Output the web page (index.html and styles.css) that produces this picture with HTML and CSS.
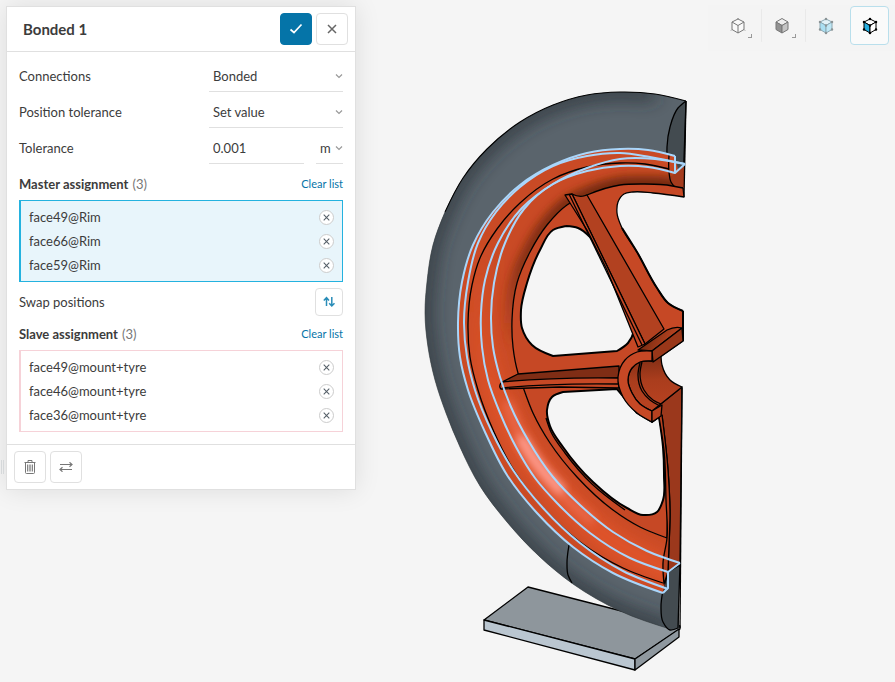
FILE: index.html
```html
<!DOCTYPE html>
<html lang="en">
<head>
<meta charset="utf-8">
<title>Bonded 1</title>
<link rel="stylesheet" href="styles.css">
</head>
<body>
<svg class="defs" aria-hidden="true">
  <symbol id="chev" viewBox="0 0 8 8"><path d="M1 2.500 4 5.500 7 2.500" fill="none" stroke="currentColor" stroke-width="1.200"/></symbol>
  <symbol id="x" viewBox="0 0 10 10"><path d="M1 1 9 9M9 1 1 9" fill="none" stroke="currentColor" stroke-width="1.500"/></symbol>
</svg>
<main class="app">
  <form class="panel">
    <header class="head">
      <h1>Bonded 1</h1>
      <button type="button" class="btn primary" aria-label="Apply"><svg width="14" height="12" viewBox="0 0 14 12"><path d="M1.500 6.500 5 9.500 12.500 1.500" fill="none" stroke="#fff" stroke-width="1.700"/></svg></button>
      <button type="button" class="btn" aria-label="Close"><svg width="10" height="10"><use href="#x"/></svg></button>
    </header>
    <div class="body">
      <div class="row"><label for="conn">Connections</label>
        <div class="field"><select id="conn"><option>Bonded</option></select><svg class="chev"><use href="#chev"/></svg></div></div>
      <div class="row"><label for="pos">Position tolerance</label>
        <div class="field"><select id="pos"><option>Set value</option></select><svg class="chev"><use href="#chev"/></svg></div></div>
      <div class="row"><label for="tol">Tolerance</label>
        <div class="pair">
          <div class="field"><input id="tol" type="text" value="0.001"></div>
          <div class="field unit"><select aria-label="Unit"><option>m</option></select><svg class="chev"><use href="#chev"/></svg></div>
        </div></div>
      <div class="title"><h2>Master assignment <span>(3)</span></h2><a href="#">Clear list</a></div>
      <ul class="list active">
        <li>face49@Rim<button type="button" aria-label="Remove"><svg><use href="#x"/></svg></button></li>
        <li>face66@Rim<button type="button" aria-label="Remove"><svg><use href="#x"/></svg></button></li>
        <li>face59@Rim<button type="button" aria-label="Remove"><svg><use href="#x"/></svg></button></li>
      </ul>
      <div class="swap"><span>Swap positions</span>
        <button type="button" class="btn small" aria-label="Swap positions"><svg width="12" height="12" viewBox="0 0 12 12" fill="none" stroke="#2a8db8" stroke-width="1.500"><path d="M3.500 10V2M.8 4.500 3.500 1.700 6 4.500M8.800 1V9.500M6.200 7.200 8.800 10 11.500 7.200"/></svg></button></div>
      <div class="title"><h2>Slave assignment <span>(3)</span></h2><a href="#">Clear list</a></div>
      <ul class="list">
        <li>face49@mount+tyre<button type="button" aria-label="Remove"><svg><use href="#x"/></svg></button></li>
        <li>face46@mount+tyre<button type="button" aria-label="Remove"><svg><use href="#x"/></svg></button></li>
        <li>face36@mount+tyre<button type="button" aria-label="Remove"><svg><use href="#x"/></svg></button></li>
      </ul>
    </div>
    <footer class="foot">
      <button type="button" class="btn" aria-label="Delete"><svg width="12" height="14" viewBox="0 0 12 14" fill="none" stroke="#777"><path d="M.5 2.500H11.500M4 2V.500H8V2M1.500 3V12.500Q1.500 13.500 2.500 13.500H9.500Q10.500 13.500 10.500 12.500V3"/><path d="M3.500 4.500V11.500M5.200 4.500V11.500M6.800 4.500V11.500M8.500 4.500V11.500" stroke-width=".9"/></svg></button>
      <button type="button" class="btn" aria-label="Exchange"><svg width="14" height="10" viewBox="0 0 14 10" fill="none" stroke="#777" stroke-width="1.200"><path d="M1 2.500H13M10.500 .3 13 2.500 10.500 4.700M13 7.500H1M3.500 5.300 1 7.500 3.500 9.700"/></svg></button>
    </footer>
  </form>
  <span class="grip"></span>

  <section class="viewport">
    <svg class="model" viewBox="356 0 539 682" role="img" aria-label="Wheel assembly">
      <defs>
        <filter id="b4" x="-30%" y="-30%" width="160%" height="160%"><feGaussianBlur stdDeviation="4"/></filter>
        <filter id="b10" x="-30%" y="-30%" width="160%" height="160%"><feGaussianBlur stdDeviation="9"/></filter>
        <linearGradient id="fade" gradientUnits="userSpaceOnUse" x1="0" y1="180" x2="0" y2="350"><stop offset="0" stop-color="#74290f"/><stop offset=".5" stop-color="#7a2c14" stop-opacity=".8"/><stop offset="1" stop-color="#8e3318" stop-opacity="0"/></linearGradient>
        <linearGradient id="glow" gradientUnits="userSpaceOnUse" x1="0" y1="230" x2="0" y2="420"><stop offset="0" stop-color="#e15429" stop-opacity="0"/><stop offset="1" stop-color="#e15429"/></linearGradient>
        <linearGradient id="blk" gradientUnits="userSpaceOnUse" x1="640" y1="338" x2="668" y2="350"><stop offset="0" stop-color="#72290f"/><stop offset="1" stop-color="#b54220"/></linearGradient>
        <linearGradient id="bore" gradientUnits="userSpaceOnUse" x1="650" y1="358" x2="652" y2="402"><stop offset="0" stop-color="#842f16"/><stop offset=".5" stop-color="#aa3d1d"/><stop offset="1" stop-color="#b54120"/></linearGradient>
        <clipPath id="tyreClip"><path data-curve="686,101 655,94 620,92 587,95 553,105 520,122 487,149 463,178 445,212 433,245 427,282 425,313 428,347 435,380 446,413 460,447 480,486 507,522 540,557 573,584 620,611 670,629|679,628|679,590|663,588 620,567 567,533 520,480 483,407 468,340 470,277 490,223 540,179 587,160 627,156 685,165"/></clipPath>
        <clipPath id="rimClip"><path data-curve="675,156 648,150 620,149 587,153 553,165 520,185 493,212 473,245 462,282 458,323 460,357 468,390 485,432 507,475 537,513 573,547 613,573 663,593|669,560|667,538 640,527 613,510 577,477 550,443 533,413 523,387 513,347 512,320 517,283 530,252 547,225 567,205 587,195 620,185 645,184 667,185 682,188"/></clipPath>
      </defs>
      <g stroke="#000" stroke-width="1.300" stroke-linejoin="round">
        <path fill="#8e969c" d="M484 620 528 587 680 626V629L635 659Z"/>
        <path fill="#bac6d0" d="M484 620 635 659V670L484 630Z"/>
        <path fill="#8f989f" d="M635 659 679 629V637L635 670Z"/>
      </g>
      <g clip-path="url(#tyreClip)">
        <path fill="#5a646c" d="M420 85H690V635H420Z"/>
        <path data-curve="655,94 620,92 587,95 553,105 520,122 487,149 463,178 445,212 433,245 427,282 425,313 428,347 435,380 446,413 460,447 480,486 507,522 540,557 573,584 620,611 670,629" fill="none" stroke="#2b3237" stroke-width="12" filter="url(#b10)"/>
      </g>
      <g fill="none" stroke="#000" stroke-width="1.300">
        <path stroke-width="1.100" data-curve="686,101 655,94 620,92 587,95 553,105 520,122 487,149 463,178 445,212"/>
        <path stroke="#30373b" stroke-width=".6" data-curve="445,212 433,245 427,282 425,313 428,347 435,380 446,413 460,447 480,486 507,522 540,557 573,584 620,611 670,629"/>
        <path data-curve="569,545 567,563 568,575 572,583"/>
        <path fill="#434b50" data-curve="686,101 678,108 670,127 667,147 669,172 675,188|683,188|686,101"/>
        <path fill="#434b50" data-curve="680,563|668,572|663,590 661,607 663,622 670,630 678,628|680,563"/>
      </g>
      <g clip-path="url(#rimClip)">
        <path fill="#c94a25" d="M450 140H690V600H450Z"/>
        <path filter="url(#b10)" fill="none" stroke="url(#glow)" stroke-width="24" data-curve="485,240 480,320 491,380 514,435 555,489 607,538 680,577"/>
        <path filter="url(#b4)" fill="none" stroke="url(#fade)" stroke-width="16" data-curve="682,188 667,185 645,184 620,185 587,195 567,205 547,225 530,252 517,283 512,320 513,347"/>
        <path filter="url(#b4)" fill="none" stroke="#e9674a" stroke-width="10" stroke-linecap="round" data-curve="508,405 525,445 553,485 590,519"/>
        <path filter="url(#b4)" fill="none" stroke="#ff9f91" stroke-width="10" stroke-linecap="round" data-curve="522,440 539,466 560,489"/>
      </g>
      <g stroke="#000" stroke-width="1.300" stroke-linejoin="round" fill="none">
        <path stroke="none" fill="#a43b1d" d="M675 172 685 165 684 190 675 188 670 180Z"/>
        <path d="M686 101 684 197"/><path data-curve="669,155 669,172 671,182 677,188 683,188"/>
        <path fill="#c64825" data-curve="683,188|667,185 645,184 620,185 587,195 567,205 547,225 530,252 517,283 512,320 513,347 518,373 523,387 533,413 550,443 577,477 613,510 640,527 667,538|670,420|662,416|652,411|653,362|683,341|683,311 668,303 657,288 637,252 622,228 617,213 618,202 624,194 633,192 653,193 684,197|683,188"/>
        <path fill="#f5f5f5" stroke-width="2" data-curve="566,226 553,230 540,250 527,283 521,310 522,328 532,345 553,356|617,351 628,343 634,331 620,293 603,257 590,237 578,228 566,226"/>
        <path fill="#f5f5f5" stroke-width="2" data-curve="617,389|563,392 552,397 547,410 550,426 563,447 593,482 627,508 643,515 657,512 663,500 664,475 663,447 659,417|652,422|637,413|617,389"/>
        <path data-curve="546,418 551,432 565,453 592,484 625,510"/>
        <path fill="#b24120" d="M572 194 Q580 198 587 195L664 329 645 344Z"/>
        <path fill="#c64825" d="M565 195 572 194 645 344 638 347 607 270 587 230Z"/>
        <path d="M569 194 642 345"/>
        <path stroke-width="2" data-curve="622,228 637,252 657,288 668,303 683,311"/>
        <path stroke-width="2" d="M683 311V341"/>
        <path fill="#7f2d15" d="M502 382 518 374 619 366V378Z"/>
        <path fill="#c64825" d="M502 382 Q555 377 619 378V388L560 387 501 389Q498 386 502 382Z"/>
        <path d="M502 388 Q550 383 619 384"/>
        <path fill="#9b381c" data-curve="652,411|682,387|680,565|668,572|669,545 670,515 668,470 662,415|652,422"/>
        <path fill="#b54120" data-curve="659,417 664,450 666,500 667,538 663,563 664,584|668,572|669,545 670,515 668,470 662,415"/>
        <path d="M682 388 680 628"/>
        <path fill="url(#bore)" data-curve="652,361|661,355 662,365 670,380 682,387|652,411 640,404 632,393 628,380 632,368 640,362 652,361"/>
        <path data-curve="640,363 638,375 642,391 650,400 660,406"/><path data-curve="642,362 640,374 644,390 653,400 661,404"/>
        <path fill="url(#blk)" d="M638 350 667 330Q675 326 682 328L652 351Z"/>
        <path fill="#993719" d="M652 351 682 328 683 341 653 362Z"/>
        <path fill="#c64825" data-curve="652,351 637,352 625,360 618,377 623,397 637,413 652,422|652,411 640,404 632,393 628,380 632,368 640,362 652,361|652,351"/>
        <path fill="#b54120" d="M652 411 662 405 661 416 652 422Z"/>
        <path data-curve="669,169 645,164 620,163 587,167 553,179 520,203 497,229 480,258 472,285 468,323 470,357 478,390 494,432 515,472 545,510 580,542 623,568 663,583"/>
      </g>
      <g fill="none" stroke="#a9d6fb" stroke-width="2" stroke-linejoin="round">
        <path data-curve="675,156 648,150 620,149 587,153 553,165 520,185 493,212 473,245 462,282 458,323 460,357 468,390 485,432 507,475 537,513 573,547 613,573 663,593"/>
        <path data-curve="685,164 650,157 620,153 587,156 553,166 520,187 496,212 478,243 468,282 464,323 467,357 475,390 492,432 513,470 543,508 580,543 623,571 668,589"/>
        <path data-curve="685,164 655,159 620,159 587,168 553,184 522,208 498,243 485,280 481,313 482,347 488,380 500,413 516,447 535,478 557,503 590,533 630,558 668,572"/>
        <path data-curve="675,173 648,167 620,166 587,171 553,184 524,209 505,243 494,283 491,317 493,347 500,377 511,407 528,440 553,477 580,505 613,532 647,551 680,563"/>
        <path d="M675 156V173L685 164M680 563 668 572V588L663 593"/>
      </g>
    </svg>
    <nav class="tools" aria-label="Display mode">
      <button type="button" class="tool" aria-label="Wireframe"><svg viewBox="0 0 18 18" fill="none" stroke="#777"><path fill="#fafafa" d="M9 2 15 5V12.500L9 16 3 12.500V5Z"/><path d="M3 5 9 8.500 15 5M9 8.500V16M9 1V2M2 13.500 3 12.500M16 13.500 15 12.500"/></svg><i></i></button>
      <button type="button" class="tool" aria-label="Solid"><svg viewBox="0 0 18 18" stroke="#777" stroke-linejoin="round"><path fill="#eee" d="M9 1.500 15 5 9 8.500 3 5Z"/><path fill="#929292" d="M3 5 9 8.500V16L3 12.500Z"/><path fill="#c4c4c4" d="M15 5 9 8.500V16L15 12.500Z"/></svg><i></i></button>
      <button type="button" class="tool" aria-label="Translucent"><svg viewBox="0 0 18 18" stroke="#8caab5"><path fill="#e2f2f8" d="M9 2 15 5 9 8.500 3 5Z"/><path fill="#aadff2" d="M3 5 9 8.500V16L3 12.500Z"/><path fill="#bfe7f5" d="M15 5 9 8.500V16L15 12.500Z"/><path stroke="#8c9496" stroke-width="2.500" stroke-linecap="round" d="M9 2h0M3 5h0M15 5h0M3 12.500h0M15 12.500h0M9 16h0M9 8.500h0"/></svg></button>
      <button type="button" class="tool on" aria-label="Faces" aria-pressed="true"><svg viewBox="0 0 18 18" stroke="#000"><path fill="#fff" d="M9 2 15 5 9 8.500 3 5Z"/><path fill="#25aee0" d="M3 5 9 8.500V16L3 12.500Z"/><path fill="#fff" d="M15 5 9 8.500V16L15 12.500Z"/><path stroke-width="2.500" stroke-linecap="round" d="M9 2h0M3 5h0M15 5h0M3 12.500h0M15 12.500h0M9 16h0M9 8.500h0"/></svg></button>
    </nav>
  </section>
</main>
<script src="model.js"></script>
</body>
</html>
```
FILE: styles.css
```css
* { box-sizing: border-box; }
body {
  margin: 0;
  background: #f5f5f5;
  color: #3c3c3c;
  font: 13px/20px Lato, "Liberation Sans", sans-serif;
}
button, input, select { font: inherit; color: inherit; }
.defs { position: absolute; width: 0; height: 0; }
.app { position: relative; display: flex; align-items: flex-start; min-height: 100vh; }
.panel {
  flex: 0 1 350px;
  margin: 6px 0 0 6px;
  background: #fff;
  border: 1px solid #e0e0e0;
  box-shadow: 0 0 24px rgba(0, 0, 0, .1);
}
.head { display: flex; align-items: center; gap: 4px; padding: 6px 7px 6px 16px; border-bottom: 1px solid #e0e0e0; }
h1 { flex: 1; margin: 0; font-size: 15px; font-weight: 700; }
.btn {
  display: grid;
  place-items: center;
  width: 32px;
  height: 32px;
  padding: 0;
  background: #fff;
  border: 1px solid #e0e0e0;
  border-radius: 4px;
  color: #666;
}
.primary { background: #0574a8; border-color: #0574a8; }
.small { width: 28px; height: 28px; }
.body { padding: 6px 12px 12px; }
.row { display: grid; grid-template-columns: 1fr 134px; align-items: center; height: 36px; }
.field { display: grid; grid-template-columns: 1fr 8px; align-items: center; height: 32px; border-bottom: 1px solid #e0e0e0; }
.field select, .field input {
  grid-area: 1 / 1 / 2 / 3;
  width: 100%;
  height: 30px;
  padding: 0 4px;
  border: 0;
  background: none;
  appearance: none;
  outline: 0;
}
.chev { grid-area: 1 / 2; width: 8px; height: 8px; color: #999; pointer-events: none; }
.pair { display: grid; grid-template-columns: 1fr 27px; gap: 12px; }
.title { display: flex; align-items: center; justify-content: space-between; height: 32px; }
.row + .title { margin-top: 2px; }
h2 { margin: 0; font-size: 13px; font-weight: 700; }
h2 span { margin-left: 1px; font-weight: 400; color: #777; }
a { color: #0574a8; font-size: 11px; text-decoration: none; }
.list { margin: 0; padding: 4px 8px; list-style: none; border: 1px solid #f6d2d8; border-left-width: 2px; }
.list.active { background: #e8f5fb; border-color: #24b2df; }
.list li { display: flex; align-items: center; justify-content: space-between; height: 24px; }
.list button {
  display: grid;
  place-items: center;
  width: 15px;
  height: 15px;
  padding: 0;
  background: #fff;
  border: 1px solid #ccc;
  border-radius: 50%;
  color: #555f68;
}
.list button svg { width: 7px; height: 7px; }
.swap { display: flex; align-items: center; justify-content: space-between; height: 36px; padding-top: 4px; }
.foot { display: flex; gap: 4px; padding: 6px 7px; border-top: 1px solid #e0e0e0; }
.grip { position: absolute; left: 1px; top: 460px; width: 3px; height: 14px; border: solid #d5d8da; border-width: 0 1px; }
.viewport { position: relative; flex: 1; min-width: 0; }
.model { display: block; width: 100%; height: 100vh; }
.tools { position: absolute; top: 5px; right: 0; display: flex; padding: 1px 6px 6px 5px; background: #f4f4f4; }
.tool {
  position: relative;
  display: grid;
  place-items: center;
  width: 39px;
  height: 39px;
  margin-left: 5px;
  padding: 0;
  border: 1px solid transparent;
  border-radius: 4px;
  background: none;
}
.tool + .tool:not(.on) { box-shadow: -4px 0 0 -3px #e9e9e9; }
.tool svg { width: 18px; height: 18px; }
.tool i { position: absolute; right: 4px; bottom: 6px; width: 4px; height: 4px; border: solid #999; border-width: 0 1px 1px 0; }
.tool.on { border-color: #b9dfec; background: #fafafa; }
```
FILE: model.js
```js
// Draws each data-curve as smooth runs; "|" marks a corner between runs.
// Tangents are weighted by the distance between neighbouring points.
function dist(a, b) { return Math.hypot(a[0] - b[0], a[1] - b[1]); }

function tangent(a, b, c) {
  var d1 = dist(a, b) || 1, d2 = dist(b, c) || 1;
  return [0, 1].map(function (k) {
    return ((b[k] - a[k]) / d1 * d2 + (c[k] - b[k]) / d2 * d1) / (d1 + d2);
  });
}

document.querySelectorAll('[data-curve]').forEach(function (path) {
  var d = '';
  path.dataset.curve.split('|').forEach(function (run, n) {
    var p = run.trim().split(/\s+/).map(function (s) { return s.split(',').map(Number); });
    d += (n ? 'L' : 'M') + p[0];
    var t = p.map(function (b, i) {
      if (i > 0 && i < p.length - 1) return tangent(p[i - 1], b, p[i + 1]);
      return null;
    });
    for (var i = 0; i < p.length - 1; i++) {
      var b = p[i], c = p[i + 1], l = dist(b, c) / 3;
      var s = t[i], e = t[i + 1];
      var c1 = s ? [b[0] + s[0] * l, b[1] + s[1] * l] : null;
      var c2 = e ? [c[0] - e[0] * l, c[1] - e[1] * l] : null;
      if (!c1) c1 = c2 ? [(b[0] + c2[0]) / 2, (b[1] + c2[1]) / 2] : b;
      if (!c2) c2 = [(c[0] + c1[0]) / 2, (c[1] + c1[1]) / 2];
      d += 'C' + [c1[0], c1[1], c2[0], c2[1], c[0], c[1]];
    }
  });
  path.setAttribute('d', d);
});
```
